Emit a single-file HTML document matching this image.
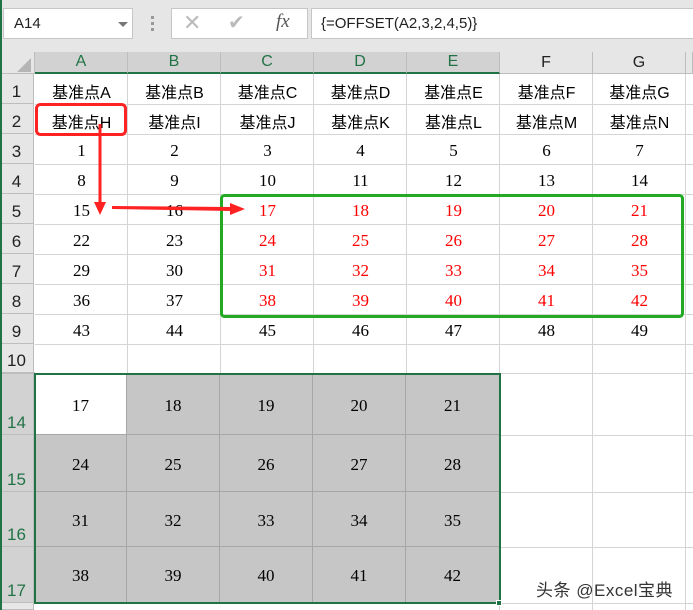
<!DOCTYPE html>
<html><head><meta charset="utf-8"><style>
*{margin:0;padding:0;box-sizing:border-box}
body{width:693px;height:610px;overflow:hidden;background:#fff;position:relative;font-family:"Liberation Serif",serif}
.a{position:absolute}
.c{position:absolute;display:flex;align-items:center;justify-content:center;font-size:17px;color:#000;padding-top:3px}
.k{font-family:"Liberation Sans","Noto Sans CJK SC",sans-serif;font-size:16px}
.r{color:#f00}
.rh{position:absolute;left:0;width:34px;background:#e6e6e6;border-right:1px solid #bdbdbd;border-bottom:1px solid #bdbdbd;font-family:"Liberation Sans",sans-serif;font-size:17px;color:#222;display:flex;align-items:flex-end;justify-content:center;padding-bottom:1px}
.ch{position:absolute;top:52px;height:22px;background:#e6e6e6;border-right:1px solid #bdbdbd;font-family:"Liberation Sans",sans-serif;font-size:16px;color:#222;display:flex;align-items:center;justify-content:center}
.sel{background:#d2d2d2;color:#217346;border-bottom:2px solid #217346}
.g{position:absolute;background:#c6c6c6;border-right:1px solid #a6a6a6;border-bottom:1px solid #a6a6a6;display:flex;align-items:center;justify-content:center;font-size:17px;padding-top:3px}
</style></head><body>
<div class="a" style="left:0;top:0;width:693px;height:52px;background:#e6e6e6"></div>
<div class="a" style="left:0;top:0;width:2px;height:610px;background:#217346;z-index:5"></div>
<div class="a" style="left:3px;top:8px;width:130px;height:31px;background:#fff;border:1px solid #c6c6c6;font-family:'Liberation Sans',sans-serif;font-size:15px;line-height:29px;padding-left:10px;color:#222">A14</div>
<div class="a" style="left:118px;top:22px;width:0;height:0;border-left:5px solid transparent;border-right:5px solid transparent;border-top:5px solid #777"></div>
<div class="a" style="left:151px;top:16px;width:3px;height:3px;background:#999;box-shadow:0 6px 0 #999,0 12px 0 #999"></div>
<div class="a" style="left:171px;top:8px;width:137px;height:31px;background:#fff;border:1px solid #c6c6c6"></div>
<div class="a" style="left:183px;top:10px;font-family:'Liberation Sans',sans-serif;font-size:22px;color:#bbb">✕</div>
<div class="a" style="left:228px;top:10px;font-family:'DejaVu Sans',sans-serif;font-size:20px;color:#bbb">✔</div>
<div class="a" style="left:276px;top:11px;font-style:italic;font-size:19px;color:#555;font-family:'Liberation Serif',serif">fx</div>
<div class="a" style="left:311px;top:8px;width:382px;height:31px;background:#fff;border:1px solid #c6c6c6;border-right:none;font-family:'Liberation Sans',sans-serif;font-size:15px;line-height:29px;padding-left:9px;color:#222">{=OFFSET(A2,3,2,4,5)}</div>
<div class="a" style="left:0;top:52px;width:35px;height:22px;background:#e6e6e6;border-right:1px solid #bdbdbd;border-bottom:1px solid #bdbdbd"></div>
<div class="a" style="left:17px;top:58px;width:0;height:0;border-left:14px solid transparent;border-bottom:14px solid #b5b5b5"></div>
<div class="ch sel" style="left:35px;width:93px">A</div>
<div class="ch sel" style="left:128px;width:93px">B</div>
<div class="ch sel" style="left:221px;width:93px">C</div>
<div class="ch sel" style="left:314px;width:93px">D</div>
<div class="ch sel" style="left:407px;width:93px">E</div>
<div class="ch" style="left:500px;width:93px;border-bottom:1px solid #bdbdbd">F</div>
<div class="ch" style="left:593px;width:93px;border-bottom:1px solid #bdbdbd">G</div>
<div class="ch" style="left:686px;width:7px;border-bottom:1px solid #bdbdbd"></div>
<svg class="a" style="left:0;top:0" width="693" height="610">
<g stroke="#d4d4d4" stroke-width="1">
<line x1="127.5" y1="74" x2="127.5" y2="374"/><line x1="220.5" y1="74" x2="220.5" y2="374"/><line x1="313.5" y1="74" x2="313.5" y2="374"/><line x1="406.5" y1="74" x2="406.5" y2="374"/><line x1="499.5" y1="74" x2="499.5" y2="610"/><line x1="592.5" y1="74" x2="592.5" y2="610"/><line x1="685.5" y1="74" x2="685.5" y2="610"/>
<line x1="35" y1="104.5" x2="693" y2="104.5"/><line x1="35" y1="134.5" x2="693" y2="134.5"/><line x1="35" y1="164.5" x2="693" y2="164.5"/><line x1="35" y1="194.5" x2="693" y2="194.5"/><line x1="35" y1="224.5" x2="693" y2="224.5"/><line x1="35" y1="254.5" x2="693" y2="254.5"/><line x1="35" y1="284.5" x2="693" y2="284.5"/><line x1="35" y1="314.5" x2="693" y2="314.5"/><line x1="35" y1="344.5" x2="693" y2="344.5"/><line x1="35" y1="373.5" x2="693" y2="373.5"/><line x1="500" y1="435.5" x2="693" y2="435.5"/><line x1="500" y1="492.5" x2="693" y2="492.5"/><line x1="500" y1="547.5" x2="693" y2="547.5"/><line x1="35" y1="603.5" x2="693" y2="603.5"/>
</g></svg>
<div class="rh" style="top:74px;height:30px">1</div>
<div class="rh" style="top:104px;height:30px">2</div>
<div class="rh" style="top:134px;height:30px">3</div>
<div class="rh" style="top:164px;height:30px">4</div>
<div class="rh" style="top:194px;height:30px">5</div>
<div class="rh" style="top:224px;height:30px">6</div>
<div class="rh" style="top:254px;height:30px">7</div>
<div class="rh" style="top:284px;height:30px">8</div>
<div class="rh" style="top:314px;height:30px">9</div>
<div class="rh" style="top:344px;height:29px">10</div>
<div class="a" style="left:0;top:372px;width:35px;height:2px;background:#bdbdbd"></div>
<div class="rh" style="top:374px;height:61px;background:#d2d2d2;color:#217346">14</div>
<div class="rh" style="top:435px;height:57px;background:#d2d2d2;color:#217346">15</div>
<div class="rh" style="top:492px;height:55px;background:#d2d2d2;color:#217346">16</div>
<div class="rh" style="top:547px;height:56px;background:#d2d2d2;color:#217346">17</div>
<div class="rh" style="top:603px;height:7px"></div>
<div class="c k" style="left:35px;top:74px;width:93px;height:30px">基准点A</div>
<div class="c k" style="left:128px;top:74px;width:93px;height:30px">基准点B</div>
<div class="c k" style="left:221px;top:74px;width:93px;height:30px">基准点C</div>
<div class="c k" style="left:314px;top:74px;width:93px;height:30px">基准点D</div>
<div class="c k" style="left:407px;top:74px;width:93px;height:30px">基准点E</div>
<div class="c k" style="left:500px;top:74px;width:93px;height:30px">基准点F</div>
<div class="c k" style="left:593px;top:74px;width:93px;height:30px">基准点G</div>
<div class="c k" style="left:35px;top:104px;width:93px;height:30px">基准点H</div>
<div class="c k" style="left:128px;top:104px;width:93px;height:30px">基准点I</div>
<div class="c k" style="left:221px;top:104px;width:93px;height:30px">基准点J</div>
<div class="c k" style="left:314px;top:104px;width:93px;height:30px">基准点K</div>
<div class="c k" style="left:407px;top:104px;width:93px;height:30px">基准点L</div>
<div class="c k" style="left:500px;top:104px;width:93px;height:30px">基准点M</div>
<div class="c k" style="left:593px;top:104px;width:93px;height:30px">基准点N</div>
<div class="c" style="left:35px;top:134px;width:93px;height:30px">1</div>
<div class="c" style="left:128px;top:134px;width:93px;height:30px">2</div>
<div class="c" style="left:221px;top:134px;width:93px;height:30px">3</div>
<div class="c" style="left:314px;top:134px;width:93px;height:30px">4</div>
<div class="c" style="left:407px;top:134px;width:93px;height:30px">5</div>
<div class="c" style="left:500px;top:134px;width:93px;height:30px">6</div>
<div class="c" style="left:593px;top:134px;width:93px;height:30px">7</div>
<div class="c" style="left:35px;top:164px;width:93px;height:30px">8</div>
<div class="c" style="left:128px;top:164px;width:93px;height:30px">9</div>
<div class="c" style="left:221px;top:164px;width:93px;height:30px">10</div>
<div class="c" style="left:314px;top:164px;width:93px;height:30px">11</div>
<div class="c" style="left:407px;top:164px;width:93px;height:30px">12</div>
<div class="c" style="left:500px;top:164px;width:93px;height:30px">13</div>
<div class="c" style="left:593px;top:164px;width:93px;height:30px">14</div>
<div class="c" style="left:35px;top:194px;width:93px;height:30px">15</div>
<div class="c" style="left:128px;top:194px;width:93px;height:30px">16</div>
<div class="c r" style="left:221px;top:194px;width:93px;height:30px">17</div>
<div class="c r" style="left:314px;top:194px;width:93px;height:30px">18</div>
<div class="c r" style="left:407px;top:194px;width:93px;height:30px">19</div>
<div class="c r" style="left:500px;top:194px;width:93px;height:30px">20</div>
<div class="c r" style="left:593px;top:194px;width:93px;height:30px">21</div>
<div class="c" style="left:35px;top:224px;width:93px;height:30px">22</div>
<div class="c" style="left:128px;top:224px;width:93px;height:30px">23</div>
<div class="c r" style="left:221px;top:224px;width:93px;height:30px">24</div>
<div class="c r" style="left:314px;top:224px;width:93px;height:30px">25</div>
<div class="c r" style="left:407px;top:224px;width:93px;height:30px">26</div>
<div class="c r" style="left:500px;top:224px;width:93px;height:30px">27</div>
<div class="c r" style="left:593px;top:224px;width:93px;height:30px">28</div>
<div class="c" style="left:35px;top:254px;width:93px;height:30px">29</div>
<div class="c" style="left:128px;top:254px;width:93px;height:30px">30</div>
<div class="c r" style="left:221px;top:254px;width:93px;height:30px">31</div>
<div class="c r" style="left:314px;top:254px;width:93px;height:30px">32</div>
<div class="c r" style="left:407px;top:254px;width:93px;height:30px">33</div>
<div class="c r" style="left:500px;top:254px;width:93px;height:30px">34</div>
<div class="c r" style="left:593px;top:254px;width:93px;height:30px">35</div>
<div class="c" style="left:35px;top:284px;width:93px;height:30px">36</div>
<div class="c" style="left:128px;top:284px;width:93px;height:30px">37</div>
<div class="c r" style="left:221px;top:284px;width:93px;height:30px">38</div>
<div class="c r" style="left:314px;top:284px;width:93px;height:30px">39</div>
<div class="c r" style="left:407px;top:284px;width:93px;height:30px">40</div>
<div class="c r" style="left:500px;top:284px;width:93px;height:30px">41</div>
<div class="c r" style="left:593px;top:284px;width:93px;height:30px">42</div>
<div class="c" style="left:35px;top:314px;width:93px;height:30px">43</div>
<div class="c" style="left:128px;top:314px;width:93px;height:30px">44</div>
<div class="c" style="left:221px;top:314px;width:93px;height:30px">45</div>
<div class="c" style="left:314px;top:314px;width:93px;height:30px">46</div>
<div class="c" style="left:407px;top:314px;width:93px;height:30px">47</div>
<div class="c" style="left:500px;top:314px;width:93px;height:30px">48</div>
<div class="c" style="left:593px;top:314px;width:93px;height:30px">49</div>
<div class="g" style="left:35px;top:374px;width:92px;height:61px;background:#fff">17</div>
<div class="g" style="left:127px;top:374px;width:93px;height:61px">18</div>
<div class="g" style="left:220px;top:374px;width:93px;height:61px">19</div>
<div class="g" style="left:313px;top:374px;width:93px;height:61px">20</div>
<div class="g" style="left:406px;top:374px;width:94px;height:61px">21</div>
<div class="g" style="left:35px;top:435px;width:92px;height:57px">24</div>
<div class="g" style="left:127px;top:435px;width:93px;height:57px">25</div>
<div class="g" style="left:220px;top:435px;width:93px;height:57px">26</div>
<div class="g" style="left:313px;top:435px;width:93px;height:57px">27</div>
<div class="g" style="left:406px;top:435px;width:94px;height:57px">28</div>
<div class="g" style="left:35px;top:492px;width:92px;height:55px">31</div>
<div class="g" style="left:127px;top:492px;width:93px;height:55px">32</div>
<div class="g" style="left:220px;top:492px;width:93px;height:55px">33</div>
<div class="g" style="left:313px;top:492px;width:93px;height:55px">34</div>
<div class="g" style="left:406px;top:492px;width:94px;height:55px">35</div>
<div class="g" style="left:35px;top:547px;width:92px;height:56px">38</div>
<div class="g" style="left:127px;top:547px;width:93px;height:56px">39</div>
<div class="g" style="left:220px;top:547px;width:93px;height:56px">40</div>
<div class="g" style="left:313px;top:547px;width:93px;height:56px">41</div>
<div class="g" style="left:406px;top:547px;width:94px;height:56px">42</div>
<div class="a" style="left:34px;top:373px;width:467px;height:231px;border:2px solid #217346"></div>
<div class="a" style="left:496px;top:600px;width:6px;height:6px;background:#217346;border:1px solid #fff"></div>
<svg class="a" style="left:0;top:0" width="693" height="610">
<rect x="36.5" y="104.5" width="89" height="30" rx="4" fill="none" stroke="#f22" stroke-width="3"/>
<rect x="221.5" y="195.5" width="461" height="121" rx="3" fill="none" stroke="#22aa22" stroke-width="3"/>
<line x1="100" y1="124" x2="100" y2="204" stroke="#f22" stroke-width="3"/>
<polygon points="94,202 106,202 100,215" fill="#f22"/>
<polygon points="112,206 232,207 232,211 112,209" fill="#f22"/>
<polygon points="230,203 245,209 230,215" fill="#f22"/>
</svg>
<div class="a" style="left:536px;top:576px;font-family:'Liberation Sans','Noto Sans CJK SC',sans-serif;font-size:17px;letter-spacing:0.5px;color:#333">头条 @Excel宝典</div>
</body></html>
